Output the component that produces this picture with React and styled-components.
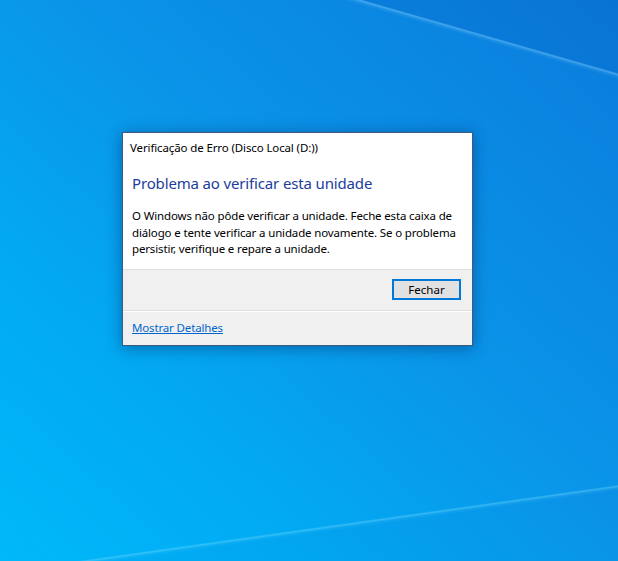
import React from "react";
import styled, { createGlobalStyle } from "styled-components";

const Global = createGlobalStyle`
  html, body { margin: 0; padding: 0; }
  body { font-family: "Noto Sans", "Open Sans", sans-serif; }
  * { box-sizing: border-box; }
`;

const Desktop = styled.div`
  width: 618px;
  height: 561px;
  overflow: hidden;
  padding: 132px 0 0 122px;
  background:
    linear-gradient(196deg, transparent 70px, rgba(150, 215, 255, 0.4) 71.5px, rgba(150, 215, 255, 0.12) 73.5px, transparent 76px),
    linear-gradient(172deg, transparent 566px, rgba(120, 220, 255, 0.4) 567.5px, rgba(120, 220, 255, 0.1) 569.5px, transparent 572px),
    linear-gradient(196deg, rgba(0, 40, 150, 0.1) 0, rgba(0, 40, 150, 0.1) 71px, transparent 71px),
    linear-gradient(172deg, transparent 568px, rgba(0, 50, 160, 0.04) 569px),
    linear-gradient(to bottom left, #0a7cdc 0%, #0a95e9 46%, #02aaf3 74%, #00b8fa 100%);
`;

const Dialog = styled.div`
  width: 351px;
  height: 214px;
  display: flex;
  flex-direction: column;
  background: #ffffff;
  border: 1px solid #3d5c7d;
  box-shadow: 0 2px 14px rgba(0, 30, 80, 0.45);
  font-family: "Noto Sans", "Open Sans", sans-serif;
  color: #000;
`;

const TitleBar = styled.div`
  height: 31px;
  padding: 7px 0 0 7px;
  font-size: 11.5px;
  line-height: 16px;
  letter-spacing: -0.12px;
`;

const Content = styled.div`
  flex: 1;
  padding: 8px 0 0 9px;
  border-bottom: 1px solid #dfdfdf;
`;

const Instruction = styled.h1`
  margin: 0;
  font-size: 15px;
  font-weight: 400;
  line-height: 22px;
  color: #1c3d9c;
  letter-spacing: -0.15px;
`;

const Message = styled.p`
  margin: 14px 0 0 0;
  width: 330px;
  font-size: 11.5px;
  line-height: 16.5px;
  letter-spacing: -0.15px;
`;

const ButtonRow = styled.div`
  height: 41px;
  display: flex;
  justify-content: flex-end;
  align-items: flex-start;
  padding: 9px 11px 0 0;
  background: #f0f0f0;
  border-bottom: 1px solid #dfdfdf;
`;

const Button = styled.button`
  width: 69px;
  height: 21px;
  padding: 0;
  border: 2px solid #0078d7;
  background: #e1e1e1;
  font-family: inherit;
  font-size: 11.5px;
  line-height: 15px;
  color: #000;
`;

const Footer = styled.div`
  height: 34px;
  display: flex;
  align-items: center;
  padding: 0 0 2px 9px;
  background: #f0f0f0;
  border-top: 1px solid #ffffff;
`;

const Link = styled.a`
  font-size: 11.5px;
  letter-spacing: -0.15px;
  color: #0066cc;
  text-decoration: underline;
  cursor: pointer;
`;

export default function App() {
  return (
    <>
      <Global />
      <Desktop>
        <Dialog>
          <TitleBar>Verificação de Erro (Disco Local (D:))</TitleBar>
          <Content>
            <Instruction>Problema ao verificar esta unidade</Instruction>
            <Message>
              O Windows não pôde verificar a unidade. Feche esta caixa de diálogo e tente verificar a
              unidade novamente. Se o problema persistir, verifique e repare a unidade.
            </Message>
          </Content>
          <ButtonRow>
            <Button>Fechar</Button>
          </ButtonRow>
          <Footer>
            <Link>Mostrar Detalhes</Link>
          </Footer>
        </Dialog>
      </Desktop>
    </>
  );
}
